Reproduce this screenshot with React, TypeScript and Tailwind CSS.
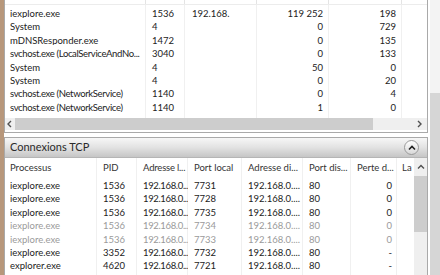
import React from "react";

const topRows = [
  ["iexplore.exe", "1536", "192.168.", "119 252", "198"],
  ["System", "4", "", "0", "729"],
  ["mDNSResponder.exe", "1472", "", "0", "135"],
  ["svchost.exe (LocalServiceAndNo...", "3040", "", "0", "133"],
  ["System", "4", "", "50", "0"],
  ["System", "4", "", "0", "20"],
  ["svchost.exe (NetworkService)", "1140", "", "0", "4"],
  ["svchost.exe (NetworkService)", "1140", "", "1", "0"],
];

const botRows: { c: string[]; g?: boolean }[] = [
  { c: ["iexplore.exe", "1536", "192.168.0...", "7731", "192.168.0....", "80", "0"] },
  { c: ["iexplore.exe", "1536", "192.168.0...", "7728", "192.168.0....", "80", "0"] },
  { c: ["iexplore.exe", "1536", "192.168.0...", "7735", "192.168.0....", "80", "0"] },
  { c: ["iexplore.exe", "1536", "192.168.0...", "7734", "192.168.0....", "80", "0"], g: true },
  { c: ["iexplore.exe", "1536", "192.168.0...", "7733", "192.168.0....", "80", "0"], g: true },
  { c: ["iexplore.exe", "3352", "192.168.0...", "7732", "192.168.0....", "80", "-"] },
  { c: ["explorer.exe", "4620", "192.168.0...", "7721", "192.168.0....", "80", "-"] },
];

const Chev = ({ dir }: { dir: "l" | "r" | "u" }) => {
  const d =
    dir === "l" ? "M5 1 L2 4 L5 7" : dir === "r" ? "M2 1 L5 4 L2 7" : "M1 5.5 L4 2.5 L7 5.5";
  return (
    <svg width="8" height="8" viewBox="0 0 8 8">
      <path d={d} fill="none" stroke="#505050" strokeWidth="1.4" />
    </svg>
  );
};

export default function App() {
  return (
    <div
      className="w-[440px] h-[275px] overflow-hidden flex bg-white text-[9.5px] text-[#222]"
      style={{ fontFamily: 'Lato, "Noto Sans", sans-serif' }}
    >
      <div className="w-[4px] bg-[#b7977b] shrink-0" />
      <div className="w-[424px] flex flex-col shrink-0">
        {/* top panel */}
        <div className="h-[133px] border-x border-b border-[#a9a9a9] flex flex-col shrink-0">
          <div className="h-[5px] flex border-b border-[#ececec]">
            <div className="w-[141px] border-r border-[#e4e4e4]" />
            <div className="w-[39px] border-r border-[#e4e4e4]" />
            <div className="w-[72px] border-r border-[#e4e4e4]" />
            <div className="w-[72px] border-r border-[#e4e4e4]" />
            <div className="w-[73px] border-r border-[#e4e4e4]" />
          </div>
          <div className="flex-1 flex relative pt-[2px]">
            <div className="absolute inset-0 flex pointer-events-none">
              <div className="w-[141px] border-r border-[#f0f0f0]" />
              <div className="w-[39px] border-r border-[#f0f0f0]" />
              <div className="w-[72px] border-r border-[#f0f0f0]" />
              <div className="w-[72px] border-r border-[#f0f0f0]" />
              <div className="w-[73px] border-r border-[#f0f0f0]" />
            </div>
            <div className="flex flex-col relative">
              {topRows.map((r, i) => (
                <div key={i} className="h-[13.4px] flex items-center leading-none">
                  <div
                    className={`w-[141px] pl-[5px] whitespace-nowrap overflow-hidden ${
                      r[0].startsWith("svchost") ? "tracking-[-0.35px]" : ""
                    }`}
                  >
                    {r[0]}
                  </div>
                  <div className="w-[39px] pl-[6px]">{r[1]}</div>
                  <div className="w-[72px] pl-[7px] whitespace-nowrap overflow-hidden">{r[2]}</div>
                  <div className="w-[72px] pr-[6px] text-right">{r[3]}</div>
                  <div className="w-[73px] pr-[6px] text-right">{r[4]}</div>
                </div>
              ))}
            </div>
          </div>
          <div className="h-[12px] mb-[2px] flex bg-[#efefef]">
            <div className="w-[10px] flex items-center justify-center">
              <Chev dir="l" />
            </div>
            <div className="w-[358px] bg-[#cdcdcd]" />
            <div className="flex-1 flex items-center justify-end pr-[3px]">
              <Chev dir="r" />
            </div>
          </div>
        </div>
        <div className="h-[4px] shrink-0" />
        {/* bottom panel */}
        <div className="flex-1 border-x border-t border-[#a9a9a9] flex flex-col">
          <div className="h-[20px] shrink-0 flex items-center justify-between pl-[5px] pr-[8px] bg-gradient-to-b from-[#f7f7f7] via-[#e2e2e2] to-[#c6c6c6] border-b border-[#b5b5b5]">
            <span className="text-[11px] text-[#2a2a2a]">Connexions TCP</span>
            <div className="w-[15px] h-[15px] rounded-full border border-[#9a9a9a] bg-gradient-to-b from-white to-[#d8d8d8] flex items-center justify-center">
              <svg width="8" height="8" viewBox="0 0 8 8">
                <path d="M1 5.5 L4 2.5 L7 5.5" fill="none" stroke="#202020" strokeWidth="1.6" />
              </svg>
            </div>
          </div>
          <div className="flex-1 flex">
            <div className="flex-1 overflow-hidden relative">
              <div className="absolute inset-0 flex pointer-events-none">
                <div className="w-[92px] border-r border-[#f0f0f0] shrink-0" />
                <div className="w-[40px] border-r border-[#f0f0f0] shrink-0" />
                <div className="w-[51px] border-r border-[#f0f0f0] shrink-0" />
                <div className="w-[54px] border-r border-[#f0f0f0] shrink-0" />
                <div className="w-[61px] border-r border-[#f0f0f0] shrink-0" />
                <div className="w-[48px] border-r border-[#f0f0f0] shrink-0" />
                <div className="w-[46px] border-r border-[#f0f0f0] shrink-0" />
              </div>
              <div className="relative">
                <div className="h-[21px] flex items-center whitespace-nowrap text-[#333]">
                  <div className="w-[92px] shrink-0 pl-[5px]">Processus</div>
                  <div className="w-[40px] shrink-0 pl-[6px]">PID</div>
                  <div className="w-[51px] shrink-0 pl-[6px] overflow-hidden tracking-[-0.2px]">Adresse l...</div>
                  <div className="w-[54px] shrink-0 pl-[6px] overflow-hidden">Port local</div>
                  <div className="w-[61px] shrink-0 pl-[6px] overflow-hidden">Adresse di...</div>
                  <div className="w-[48px] shrink-0 pl-[6px] overflow-hidden">Port dis...</div>
                  <div className="w-[46px] shrink-0 pl-[6px] overflow-hidden">Perte d...</div>
                  <div className="w-[16px] shrink-0 pl-[5px] overflow-hidden">La</div>
                </div>
                {botRows.map((r, i) => (
                  <div
                    key={i}
                    className={`h-[13.4px] flex items-center leading-none whitespace-nowrap ${r.g ? "text-[#9a9a9a]" : ""}`}
                  >
                    <div className="w-[92px] shrink-0 pl-[5px]">{r.c[0]}</div>
                    <div className="w-[40px] shrink-0 pl-[6px]">{r.c[1]}</div>
                    <div className="w-[51px] shrink-0 pl-[6px] overflow-hidden tracking-[-0.35px]">{r.c[2]}</div>
                    <div className="w-[54px] shrink-0 pl-[6px]">{r.c[3]}</div>
                    <div className="w-[61px] shrink-0 pl-[6px] overflow-hidden">{r.c[4]}</div>
                    <div className="w-[48px] shrink-0 pl-[6px]">{r.c[5]}</div>
                    <div className="w-[46px] shrink-0 pr-[5px] text-right">{r.c[6]}</div>
                  </div>
                ))}
              </div>
            </div>
            <div className="w-[13px] shrink-0 flex flex-col bg-[#efefef]">
              <div className="h-[18px] flex items-center justify-center">
                <Chev dir="u" />
              </div>
              <div className="h-[56px] bg-[#cdcdcd]" />
            </div>
          </div>
        </div>
      </div>
      <div className="w-[12px] shrink-0 flex flex-col">
        <div className="h-[93px] ml-[2px] bg-[#f3f3f3]" />
        <div className="flex-1 ml-[2px] bg-[#d6d6d6]" />
      </div>
    </div>
  );
}
